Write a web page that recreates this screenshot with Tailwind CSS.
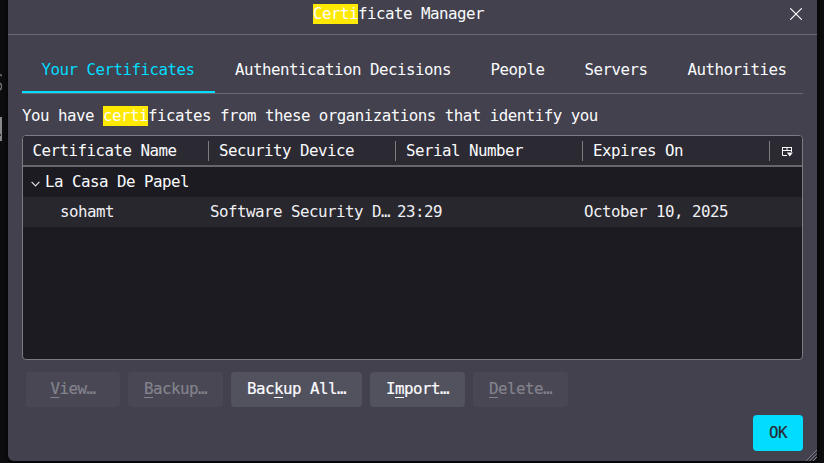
<!DOCTYPE html>
<html lang="en">
<head>
<meta charset="utf-8">
<title>Certificate Manager</title>
<script src="https://cdn.jsdelivr.net/npm/@tailwindcss/browser@4"></script>
</head>
<body class="relative h-[463px] w-[824px] overflow-hidden bg-[#0d0d10] pl-2 font-['DejaVu_Sans_Mono',monospace] text-[15.8px] leading-5 tracking-[-0.515px] text-[#fbfbfe]">
<svg class="absolute left-0 top-[72px] h-[19px] w-[2px]" viewBox="0 0 2 19" fill="none" stroke="#77777c" stroke-width="1.5"><path d="M0 2.5 2 4M0 11c2 2 2 5 0 7"/></svg>
<div class="absolute left-0 top-[117px] h-6 w-[2px] bg-[#88888b]"></div>
<div class="absolute left-0 top-[134px] h-[2px] w-px bg-[#333337]"></div>
<main class="relative flex h-[461px] w-[809px] flex-col whitespace-nowrap rounded-b-[6px] bg-[#42414d] shadow-[0_1px_5px_#000]">
<header class="relative flex h-[35px] shrink-0 items-start border-b border-[#686772] pl-[305px] pt-1">
<h1><mark class="inline-block h-5 bg-[#ffe900] align-top text-[#fbfbfe]">Certi</mark>ficate Manager</h1>
<svg class="absolute left-[782px] top-[8px] size-3" viewBox="0 0 12 12" fill="none" stroke="#fbfbfe" stroke-width="1.2" stroke-linecap="round"><path d="M.6.6 11.4 11.4M11.4.6.6 11.4"/></svg>
</header>
<nav class="ml-[14px] flex h-[59px] w-[781px] shrink-0 items-end border-b border-[#686772]">
<div class="flex h-[33px] w-[193px] border-b-2 border-[#00ddff] pl-[19.5px] text-[#00ddff]">Your Certificates</div>
<div class="flex h-[33px] w-[256px] justify-center">Authentication Decisions</div>
<div class="flex h-[33px] w-[93px] justify-center">People</div>
<div class="flex h-[33px] w-[104px] justify-center">Servers</div>
<div class="flex h-[33px] w-[135px] pl-[19.5px]">Authorities</div>
</nav>
<p class="ml-[14px] mt-3 h-5 shrink-0">You have <mark class="inline-block h-5 bg-[#ffe900] align-top text-[#fbfbfe]">certi</mark>ficates from these organizations that identify you</p>
<section class="ml-[14px] mt-[9px] flex h-[225px] w-[781px] shrink-0 flex-col overflow-hidden rounded-[4px] border border-[#7c7b82] bg-[#1c1b22]">
<div class="flex h-[31px] shrink-0 items-start border-b-2 border-[#67666d] bg-[#2b2a33] pt-[5px]">
<div class="w-[186px] border-r border-[#7c7b82] pl-[9.5px]">Certificate Name</div>
<div class="w-[187px] border-r border-[#7c7b82] pl-[10px]">Security Device</div>
<div class="w-[187px] border-r border-[#7c7b82] pl-[10px]">Serial Number</div>
<div class="w-[187px] border-r border-[#7c7b82] pl-[10px]">Expires On</div>
<svg class="ml-3 mt-[5px] h-[11px] w-[11px]" viewBox="0 0 11 11" fill="none" stroke="#fbfbfe"><path d="M5 9.5H.5v-8M0 1.5h10M9.5 1v5M0 4.5h10M5 1v4"/><path d="M4.8 6.5h6L7.8 10.5z" fill="#fbfbfe" stroke="none"/></svg>
</div>
<div class="flex h-[30px] shrink-0 items-center pl-2"><svg class="mr-[5px] mt-1 h-[6px] w-[9px]" viewBox="0 0 9 6" fill="none" stroke="#dedee2" stroke-width="1.2"><path d="m.6.8 3.9 4L8.4.8"/></svg>La Casa De Papel</div>
<div class="flex h-[30px] shrink-0 items-center bg-[#28272e] text-[#f0f0f4]"><div class="w-[187px] pl-[37px]">sohamt</div><div class="w-[187px]">Software Security D…</div><div class="w-[187px]">23:29</div><div>October 10, 2025</div></div>
</section>
<div class="ml-[18px] mt-3 flex h-[35px] shrink-0 gap-2 [-webkit-text-stroke-width:0.2px]">
<button disabled class="w-[94px] rounded-[4px] bg-[#484753] pb-px text-[#84838d]"><span class="underline decoration-1 underline-offset-[3px]">V</span>iew…</button>
<button disabled class="w-[95px] rounded-[4px] bg-[#484753] pb-px text-[#84838d]"><span class="underline decoration-1 underline-offset-[3px]">B</span>ackup…</button>
<button class="w-[131px] rounded-[4px] bg-[#52515e] pb-px">Bac<span class="underline decoration-1 underline-offset-[3px]">k</span>up All…</button>
<button class="w-[95px] rounded-[4px] bg-[#52515e] pb-px">I<span class="underline decoration-1 underline-offset-[3px]">m</span>port…</button>
<button disabled class="w-[95px] rounded-[4px] bg-[#484753] pb-px text-[#84838d]"><span class="underline decoration-1 underline-offset-[3px]">D</span>elete…</button>
</div>
<button class="ml-[745px] mt-2 h-9 w-[50px] shrink-0 rounded-[4px] bg-[#00ddff] pb-px text-[#2b2a33] [-webkit-text-stroke-width:0.2px]">OK</button>
<svg class="absolute bottom-0 right-0 h-[11px] w-[11px]" viewBox="0 0 11 11" stroke="#8a8992" stroke-width=".9"><path d="M0 11 11 0M3.5 11 11 3.5M7 11l4-4"/><path d="M1.5 11 11 1.5M5 11l6-6M8.5 11 11 8.5" stroke="#25242b"/></svg>
</main>
</body>
</html>
